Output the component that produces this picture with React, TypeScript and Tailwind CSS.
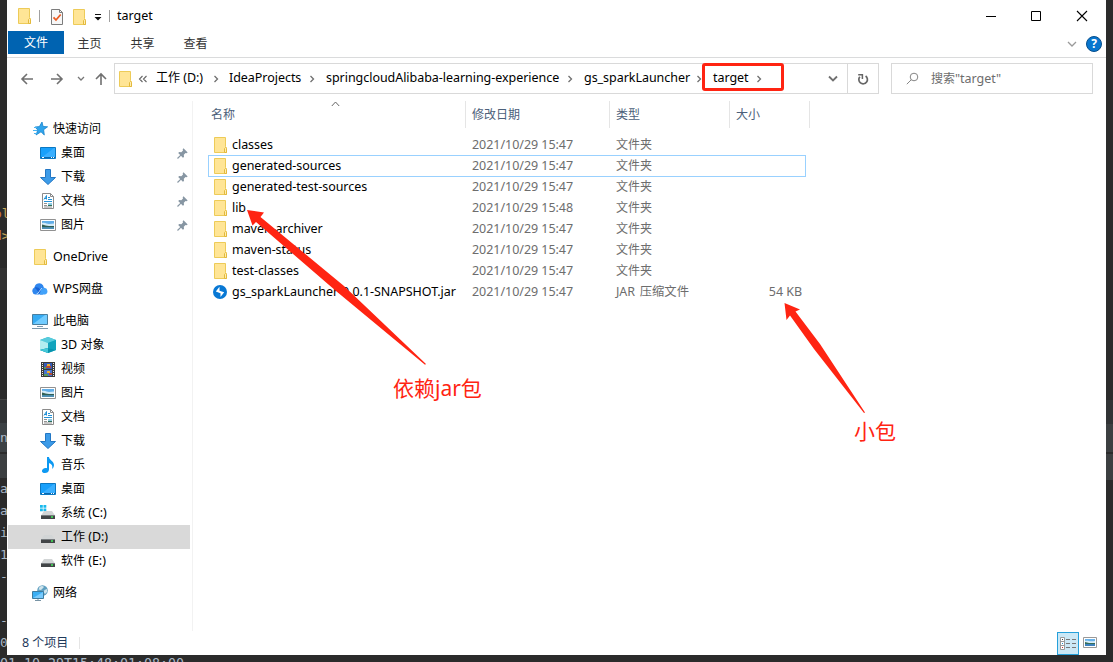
import type { ReactNode } from 'react';

const CJK = /([\u4e00-\u9fff]+)/;

function Label({ text }: { text: string }) {
  return (
    <>
      {text.split(CJK).map((part, i) =>
        CJK.test(part) ? (
          <span key={i}>{part}</span>
        ) : (
          <span key={i} className="text-[12.5px] tracking-[-0.04px] whitespace-pre">{part}</span>
        ),
      )}
    </>
  );
}

/* ---------- icons ---------- */

function Svg({ children, w = 16, h = 16 }: { children: ReactNode; w?: number; h?: number }) {
  return (
    <svg width={w} height={h} viewBox={`0 0 ${w} ${h}`} fill="none" className="block shrink-0">
      {children}
    </svg>
  );
}

const FolderIcon = () => (
  <Svg>
    <path d="M2.500.500h11v9l1 1v5h-12z" fill="#ffe596" stroke="#edcb58" />
    <path d="M12.500 15.500v-4l1-1 1 1v4z" fill="#ffedb0" stroke="#e3b93c" />
  </Svg>
);

const PageCheckIcon = () => (
  <Svg>
    <path d="M2.500.500h8l3 3v12h-11z" fill="#f7f7f7" stroke="#7c7c7c" />
    <path d="M10.500.500v3h3" stroke="#7c7c7c" />
    <path d="M4.500 8.300 7 11l4.700-5.500" stroke="#ea5b22" strokeWidth="1.800" />
  </Svg>
);

const StarIcon = () => (
  <Svg>
    <path d="m10 1 1 4.400 4.600.4-4 2.900.7 5.300L9 10.800 4 14l1.800-5-2.800-3 4.400-.4z" fill="#2fa4ec" stroke="#1683cc" strokeWidth=".8" />
    <path d="M2 6.500h3M1 9.500h4M2 12.500h3" stroke="#49b4f2" />
  </Svg>
);

const DesktopIcon = () => (
  <Svg>
    <path d="M.5 2.500h15v11H.5z" fill="#18a0fb" stroke="#0b78c2" />
    <path d="M1 13 14 3h1v10z" fill="#3aafff" />
    <path d="M1 12.500h14" stroke="#0b67ad" />
    <path d="M2 12.500h2m7 0h1m1 0h1" stroke="#fff" />
  </Svg>
);

const DownIcon = () => (
  <Svg>
    <path d="M5.500.500h5v8h5L8 15.500.500 8.500h5z" fill="#3c9be8" stroke="#2377c4" />
  </Svg>
);

const DocIcon = () => (
  <Svg>
    <path d="M2.500.500h8l3 3v12h-11z" fill="#fff" stroke="#8b8b8b" />
    <path d="M10.500.500v3h3" stroke="#8b8b8b" />
    <path d="M4 6.500 6.500 2.500v4M4 5.500h3M8 4.500h2M8 6.500h4M4 8.500h8" stroke="#2492d6" />
    <path d="M4 10.500h3M4 12.500h3M4 14h8" stroke="#929292" />
    <path d="M8 10h4v3H8z" fill="#8fcbe4" />
    <path d="M8 12h4v1H8z" fill="#2d6f58" />
  </Svg>
);

const PictureIcon = () => (
  <Svg>
    <path d="M.5 2.500h15v11H.5z" fill="#fff" stroke="#919191" />
    <path d="M2 4h12v8H2z" fill="#62aee8" />
    <path d="M2 6c3-1 5 1 7 1l5-.5V9H2z" fill="#d3eaf7" />
    <path d="M2 7.500c3 .5 4 1.500 7 1.500h5v1.500H2z" fill="#315f54" />
    <path d="M2 10.500h12V12H2z" fill="#4d8fb5" />
  </Svg>
);

const CloudIcon = () => (
  <Svg>
    <path d="M3.500 13.500A3.600 3.600 0 0 1 2.500 6.600 4.700 4.700 0 0 1 11 4.200L12 7 7 13.500z" fill="#2f86ee" />
    <path d="M2.500 6.600c2.500-.8 4.500 0 5.500 2l3 4.900H8L4.500 8.500z" fill="#1762d5" />
    <path d="M7.500 13.500c1-2 1-6.500 5-6.800a3.500 3.500 0 0 1 .5 6.800z" fill="#42a2fa" />
    <path d="M4.500 13c2.500-.5 3-4 5.500-6" stroke="#d7edff" strokeWidth=".8" />
  </Svg>
);

const PcIcon = () => (
  <Svg>
    <path d="M.5 1.500h15v10H.5z" fill="#35abf3" stroke="#4a7f9f" />
    <path d="M1 11 13 2h2v9z" fill="#72ccff" />
    <path d="M5 13.500h6M0 15.500h16" stroke="#7b98ac" />
  </Svg>
);

const CubeIcon = () => (
  <Svg>
    <path d="m8 0 8 3v10l-8 3-8-3V3z" fill="#1cb6cc" />
    <path d="m8 0 8 3-8 3-8-3z" fill="#58cbdc" />
    <path d="m0 3 8 3v5l-8 2z" fill="#b2edf0" />
    <path d="m8 6 8-3v10l-8-2z" fill="#12a4bd" />
    <path d="m0 13 8-2 8 2-8 3z" fill="#0793ae" />
    <path d="m0 13 8-2v5z" fill="#45c8d7" />
  </Svg>
);

const FilmIcon = () => (
  <Svg>
    <path d="M1 1h14v15H1z" fill="#3b3b3b" />
    <path d="M2.500 2v13M13.500 2v13" stroke="#eee" strokeDasharray="1 1" />
    <path d="M4 2h8v6H4z" fill="#365db7" />
    <path d="M4 9h8v6H4z" fill="#4775d1" />
    <path d="M7 3h3v2H7zM7 10h3v2H7z" fill="#edae30" />
    <path d="M6 5h5v2H6zM9 12h3v2H9z" fill="#b84b38" />
    <path d="M4 6h2v2H4zM4 13h4v2H4z" fill="#58995c" />
  </Svg>
);

const MusicIcon = () => (
  <Svg>
    <path d="M7 0h2c0 3 5 4 5 8 0 2-1 3-2 4 1-3 0-5-3-6v6.500C9 15 7 16 5 16c-3 0-4-2-2-4 1-1 3-1.300 4-.7z" fill="#0d99f2" />
  </Svg>
);

const DriveIcon = ({ system = false }: { system?: boolean }) => (
  <Svg>
    {system && <path d="M0 0h2.800v2.800H0zm3.500 0h2.800v2.800H3.500zM0 3.500h2.800v2.800H0zm3.500 0h2.800v2.800H3.500z" fill="#18b9ed" />}
    <path d="M4 6h8l3 4.500H1z" fill="#d2d5d6" />
    <path d="M1 10h14v4H1z" fill="#424547" />
    <path d="M1 10.500h14" stroke="#777b7e" />
    <path d="M11 12h2" stroke="#42ed58" strokeWidth="1.500" />
  </Svg>
);

const NetworkIcon = () => (
  <Svg>
    <circle cx="10.500" cy="5.500" r="5.300" fill="#5f9fc0" />
    <path d="M7.500 2c2-1.500 3.500-1 4.500 0L9 5 6.500 4.500zm5 3 2.500-1v3l-2 2-1.500-2z" fill="#cfe4ec" />
    <path d="M.5 6.500h11v7H.5z" fill="#39aef4" stroke="#3e7ca0" />
    <path d="M1 13 11 7v6z" fill="#77cafd" />
    <path d="M6 14v1M3 15.500h6" stroke="#7894a5" />
  </Svg>
);

const PinIcon = () => (
  <Svg w={11} h={11}>
    <path d="M6.500.300 10.700 4.500 9.500 5.300 8.500 5.100 6.800 6.800 7 8.900 5.900 9.800 1.200 5.100 2.200 4 4.300 4.200 6 2.500 5.700 1.300z" fill="#8796a3" />
    <path d="M3.900 7.100.5 10.500" stroke="#8796a3" strokeWidth="1.200" />
  </Svg>
);

const JarIcon = () => (
  <Svg>
    <circle cx="8" cy="8" r="7" fill="#0878d4" />
    <path d="M7.500 2.800v4l4.700 1.500L8.500 13V9.200L3.800 7.500z" fill="#fff" />
  </Svg>
);

const Chevron = () => (
  <Svg w={6} h={8}>
    <path d="m1.500 1 3 3-3 3" stroke="#6f6f6f" strokeWidth="1.300" />
  </Svg>
);

/* ---------- editor visible behind the window ---------- */

const gutter: { css: string; text?: ReactNode }[] = [
  { css: 'h-[203px]' },
  { css: 'h-[22px] text-[#c3a85b]', text: <span className="-ml-[6px]"><span className="text-[#cc7832]">o</span>l</span> },
  { css: 'h-[22px] text-[#c3a85b]', text: <span className="-ml-[6px]"><span className="text-[#cc7832]">d</span>&gt;</span> },
  { css: 'h-[21px]' },
  { css: 'h-[22px] bg-[#323232]' },
  { css: 'h-[109px]' },
  { css: 'h-[1px] bg-[#444444]' },
  { css: 'h-[23px] bg-[#313335]' },
  { css: 'h-[29px] bg-[#3c4144]', text: 'n' },
  { css: 'h-[2px] bg-[#2b2b2b]' },
  { css: 'h-[24px] bg-[#3c3f41]' },
  { css: 'h-[22px]', text: 'a' },
  { css: 'h-[22px]', text: 'a' },
  { css: 'h-[22px]', text: 'i' },
  { css: 'h-[22px]', text: '1' },
  { css: 'h-[22px]', text: '-' },
  { css: 'h-[22px]' },
  { css: 'h-[22px]', text: '-' },
  { css: 'h-[22px]', text: '0' },
];

/* ---------- top bars ---------- */

function TitleBar() {
  return (
    <div className="flex h-[31px] items-center">
      <div className="flex h-[30px] w-[220px] items-center pl-[9px]">
        <FolderIcon />
        <div className="ml-[7px] h-3 w-px bg-[#a0a0a0]" />
        <div className="mt-[2px] ml-[9px]"><PageCheckIcon /></div>
        <div className="mt-[2px] ml-[6px]"><FolderIcon /></div>
        <div className="mt-[4px] ml-[7px]">
          <Svg w={8} h={7}>
            <path d="M1 .5h6" stroke="#111" />
            <path d="M.5 3h7L4 6.500z" fill="#111" />
          </Svg>
        </div>
        <div className="ml-[7px] h-3 w-px bg-[#a0a0a0]" />
        <span className="ml-[7px] text-[12.5px] leading-4">target</span>
      </div>
      <div className="ml-auto flex items-center pr-[18px]">
        <Svg w={12} h={12}><path d="M1 6.500h10" stroke="#000" /></Svg>
        <div className="ml-[33px]"><Svg w={12} h={12}><path d="M1.500 1.500h9v9h-9z" stroke="#000" /></Svg></div>
        <div className="ml-[34px]"><Svg w={12} h={12}><path d="m1 1 10 10M11 1 1 11" stroke="#000" strokeWidth="1.100" /></Svg></div>
      </div>
    </div>
  );
}

function Ribbon() {
  return (
    <div className="flex h-[27px] items-start border-b border-[#dadbdc] pl-px">
      <div className="mr-[-1px] flex h-[23px] w-14 items-center justify-center bg-[#0063b1] pt-px text-white">文件</div>
      {['主页', '共享', '查看'].map((t) => (
        <div key={t} className="flex h-[25px] w-[53px] items-center justify-center text-[#333]">{t}</div>
      ))}
      <div className="ml-auto flex h-[26px] items-center gap-[9px] pr-[4px]">
        <Svg w={10} h={7}><path d="m1 1 4 4 4-4" stroke="#9a9a9a" strokeWidth="1.300" /></Svg>
        <div className="flex size-4 items-center justify-center rounded-full border border-[#064e8c] bg-[#0876ce] text-[12px] leading-none font-bold text-white">?</div>
      </div>
    </div>
  );
}

const crumbs = [
  { text: '工作 (D:)', css: 'w-[57px]' },
  { text: 'IdeaProjects', css: 'w-[80px]' },
  { text: 'springcloudAlibaba-learning-experience', css: 'w-[241px]' },
  { text: 'gs_sparkLauncher', css: 'w-[112px] tracking-[-0.1px]' },
  { text: 'target', css: 'w-[43px]' },
];

function AddressBar() {
  return (
    <div className="flex h-[41px] items-start pt-[5px]">
      <div className="flex h-[31px] w-[107px] items-center pl-[13px]">
        <Svg w={14} h={14}><path d="M13 7H2M7 2 2 7l5 5" stroke="#707070" strokeWidth="1.600" /></Svg>
        <div className="ml-[16px]"><Svg w={14} h={14}><path d="M1 7h11M7 2l5 5-5 5" stroke="#707070" strokeWidth="1.600" /></Svg></div>
        <div className="ml-[13px]"><Svg w={8} h={6}><path d="m1 1 3 3 3-3" stroke="#777" strokeWidth="1.300" /></Svg></div>
        <div className="ml-[9px]"><Svg w={14} h={14}><path d="M7 13V2M2 7l5-5 5 5" stroke="#707070" strokeWidth="1.600" /></Svg></div>
      </div>
      <div className="flex h-[31px] w-[765px] items-center border border-[#d9d9d9] pl-[2px]">
        <FolderIcon />
        <div className="ml-[5px] w-[18px]">
          <Svg w={10} h={8}><path d="M4.500 1 1.500 4l3 3M8.500 1l-3 3 3 3" stroke="#666" strokeWidth="1.100" /></Svg>
        </div>
        {crumbs.map((c, i) => (
          <div key={c.text} className={`flex items-center ${i === 0 ? 'pr-[10px]' : 'pr-[11px]'}`}>
            <span className={`${c.css} pb-px whitespace-nowrap`}><Label text={c.text} /></span>
            <Chevron />
          </div>
        ))}
        <div className="ml-auto flex h-full items-center">
          <Svg w={10} h={8}><path d="m1 1.500 4 4 4-4" stroke="#707070" strokeWidth="1.800" /></Svg>
          <div className="ml-[9px] flex h-full w-[31px] items-center justify-center border-l border-[#d9d9d9]">
            <Svg w={12} h={12}>
              <path d="M8.600 3A4.300 4.300 0 1 1 2.800 3.800" stroke="#666" strokeWidth="1.700" />
              <path d="M1.200 1.700h4.200v4.200" stroke="#666" strokeWidth="1.500" />
            </Svg>
          </div>
        </div>
      </div>
      <div className="ml-[12px] flex h-[31px] w-[202px] items-center border border-[#d9d9d9] pl-[14px] text-[#6d6d6d]">
        <Svg w={13} h={13}>
          <circle cx="8" cy="5" r="3.800" stroke="#858585" />
          <path d="M5.300 7.700.8 12.200" stroke="#858585" />
        </Svg>
        <span className="ml-[12px]"><Label text={'搜索"target"'} /></span>
      </div>
    </div>
  );
}

/* ---------- navigation pane ---------- */

type NavItem = { text: string; icon: ReactNode; root?: boolean; pin?: boolean; active?: boolean };

const navGroups: NavItem[][] = [
  [
    { text: '快速访问', icon: <StarIcon />, root: true },
    { text: '桌面', icon: <DesktopIcon />, pin: true },
    { text: '下载', icon: <DownIcon />, pin: true },
    { text: '文档', icon: <DocIcon />, pin: true },
    { text: '图片', icon: <PictureIcon />, pin: true },
  ],
  [{ text: 'OneDrive', icon: <FolderIcon />, root: true }],
  [{ text: 'WPS网盘', icon: <CloudIcon />, root: true }],
  [
    { text: '此电脑', icon: <PcIcon />, root: true },
    { text: '3D 对象', icon: <CubeIcon /> },
    { text: '视频', icon: <FilmIcon /> },
    { text: '图片', icon: <PictureIcon /> },
    { text: '文档', icon: <DocIcon /> },
    { text: '下载', icon: <DownIcon /> },
    { text: '音乐', icon: <MusicIcon /> },
    { text: '桌面', icon: <DesktopIcon /> },
    { text: '系统 (C:)', icon: <DriveIcon system /> },
    { text: '工作 (D:)', icon: <DriveIcon />, active: true },
    { text: '软件 (E:)', icon: <DriveIcon /> },
  ],
  [{ text: '网络', icon: <NetworkIcon />, root: true }],
];

function NavPane() {
  return (
    <div className="mt-[2px] flex h-[530px] w-[186px] flex-col gap-2 border-r border-[#f2f2f2] pt-4">
      {navGroups.map((group, g) => (
        <div key={g}>
          {group.map((item) => (
            <div
              key={item.text}
              className={`ml-px flex h-6 w-[182px] items-center gap-[5px] ${item.root ? 'pl-[24px]' : 'pl-[32px]'} ${item.active ? 'bg-[#d9d9d9]' : ''}`}
            >
              {item.icon}
              <span className="whitespace-nowrap"><Label text={item.text} /></span>
              {item.pin && <div className="mr-[2px] ml-auto"><PinIcon /></div>}
            </div>
          ))}
        </div>
      ))}
    </div>
  );
}

/* ---------- file list ---------- */

const files = [
  { name: 'classes', date: '2021/10/29 15:47' },
  { name: 'generated-sources', date: '2021/10/29 15:47', focus: true },
  { name: 'generated-test-sources', date: '2021/10/29 15:47' },
  { name: 'lib', date: '2021/10/29 15:48' },
  { name: 'maven-archiver', date: '2021/10/29 15:47' },
  { name: 'maven-status', date: '2021/10/29 15:47' },
  { name: 'test-classes', date: '2021/10/29 15:47' },
  { name: 'gs_sparkLauncher-0.0.1-SNAPSHOT.jar', date: '2021/10/29 15:47', type: 'JAR 压缩文件', size: '54 KB' },
];

function FileList() {
  return (
    <div className="flex-1 pl-[15px]">
      <div className="flex h-[35px] items-start pt-[2px] text-[#4c607a]">
        <div className="flex h-[27px] w-[258px] items-center border-r border-[#e5e5e5] pl-[3px]">
          <span>名称</span>
          <div className="mb-[22px] ml-[96px]"><Svg w={9} h={6}><path d="m.8 5 3.700-4 3.700 4" stroke="#666" /></Svg></div>
        </div>
        <div className="flex h-[27px] w-[144px] items-center border-r border-[#e5e5e5] pl-[6px]">修改日期</div>
        <div className="flex h-[27px] w-[120px] items-center border-r border-[#e5e5e5] pl-[6px]">类型</div>
        <div className="flex h-[27px] w-[80px] items-center border-r border-[#e5e5e5] pl-[6px]">大小</div>
      </div>
      {files.map((f) => (
        <div
          key={f.name}
          className={`flex h-[21px] w-[598px] items-center whitespace-nowrap ${f.focus ? '-mb-px h-[22px] border border-[#99d1ff] pr-0 pb-px' : 'px-px'}`}
        >
          <div className="flex w-[263px] items-center gap-[4px] pl-[3px]">
            {f.size ? <JarIcon /> : <FolderIcon />}
            <Label text={f.name} />
          </div>
          <div className="w-[144px] text-[#6d6d6d]"><Label text={f.date} /></div>
          <div className={`w-[120px] text-[#6d6d6d] ${f.type ? 'text-[12.3px] [word-spacing:1.5px]' : ''}`}><Label text={f.type ?? '文件夹'} /></div>
          <div className="flex-1 pr-[3px] text-right text-[#6d6d6d]"><Label text={f.size ?? ''} /></div>
        </div>
      ))}
    </div>
  );
}

function StatusBar() {
  return (
    <div className="flex h-6 items-center pl-[15px] text-[#1e395b]">
      <span className="w-[57px]"><Label text="8 个项目" /></span>
      <div className="h-3 w-px bg-[#e5e5e5]" />
      <div className="ml-auto flex items-center gap-[4px] pr-[9px]">
        <div className="flex h-[23px] w-[22px] items-center justify-center border border-[#26a0da] bg-[#cbe8f6]">
          <Svg w={16} h={13}>
            <path d="M.5.500h4v12h-4zM.5 4.500h4M.5 8.500h4" fill="#fff" stroke="#9a9a9a" />
            <path d="M2 2.500h1" stroke="#444" />
            <path d="M2 6.500h1" stroke="#258bcc" />
            <path d="M2 10.500h1" stroke="#c33" />
            <path d="M6 2.500h4m2 0h4M6 6.500h4m2 0h4M6 10.500h4m2 0h4" stroke="#777" />
          </Svg>
        </div>
        <div className="mb-[2px]">
          <Svg w={14} h={11}>
            <path d="M.5.500h13v10H.5z" fill="#fff" stroke="#999" />
            <path d="M2 2h10v7H2z" fill="#68b2ea" />
            <path d="M2 4c3-1 4 1 10 0v2H2z" fill="#d8edf9" />
            <path d="m2 5 4 1h6v1H2z" fill="#356d59" />
            <path d="M2 7h10v2H2z" fill="#3d82bd" />
          </Svg>
        </div>
      </div>
    </div>
  );
}

/* ---------- red marks drawn over the window ---------- */

function Annotations() {
  return (
    <>
      <div className="absolute top-[63px] left-[702px] h-[28px] w-[82px] rounded-[3px] border-[3px] border-[#ff2412]" />
      <svg className="absolute top-0 left-0" width="1113" height="662" viewBox="0 0 1113 662" fill="#ff2412">
        <path d="M247 210 264 212.500 260.500 217 344 286 426 364 425 364.800 336 291 256 222 252.500 225.500z" />
        <path d="M784.500 303 800 309.500 795.500 311.500 820 344 865 412.500 864 413 814 349 790 315.500 786.500 320z" />
      </svg>
      <div className="absolute top-[373px] left-[393px] text-[21px] leading-[30px] whitespace-nowrap text-[#ff2412]">依赖jar包</div>
      <div className="absolute top-[416px] left-[854px] text-[21px] leading-[30px] whitespace-nowrap text-[#ff2412]">小包</div>
    </>
  );
}

export default function App() {
  return (
    <div className="relative h-[662px] w-[1113px] overflow-hidden bg-[#2b2b2b] font-['Noto_Sans','Noto_Sans_CJK_SC',sans-serif] text-[12px] leading-[18px] text-black">
      <div className="flex h-[655px]">
        <div className="w-[7px] shrink-0 overflow-hidden font-['DejaVu_Sans_Mono',monospace] text-[13px] text-[#a9b7c6]">
          {gutter.map((g, i) => (
            <div key={i} className={`flex items-center ${g.css}`}>{g.text}</div>
          ))}
        </div>
        <div className="flex w-[1099px] shrink-0 flex-col bg-white">
          <TitleBar />
          <Ribbon />
          <AddressBar />
          <div className="flex h-[532px]">
            <NavPane />
            <FileList />
          </div>
          <StatusBar />
        </div>
        <div className="flex w-[7px] flex-col">
          <div className="h-[400px]" />
          <div className="h-[24px] bg-[#313335]" />
          <div className="h-[28px] bg-[#3c3f41]" />
          <div className="mt-[2px] h-[26px] bg-[#3c3f41]" />
        </div>
      </div>
      <div className="h-[7px] overflow-hidden font-['DejaVu_Sans_Mono',monospace] text-[13.3px] leading-[18px] text-[#a9b7c6]">
        01-10-29T15:48:01:08:00
      </div>
      <Annotations />
    </div>
  );
}
